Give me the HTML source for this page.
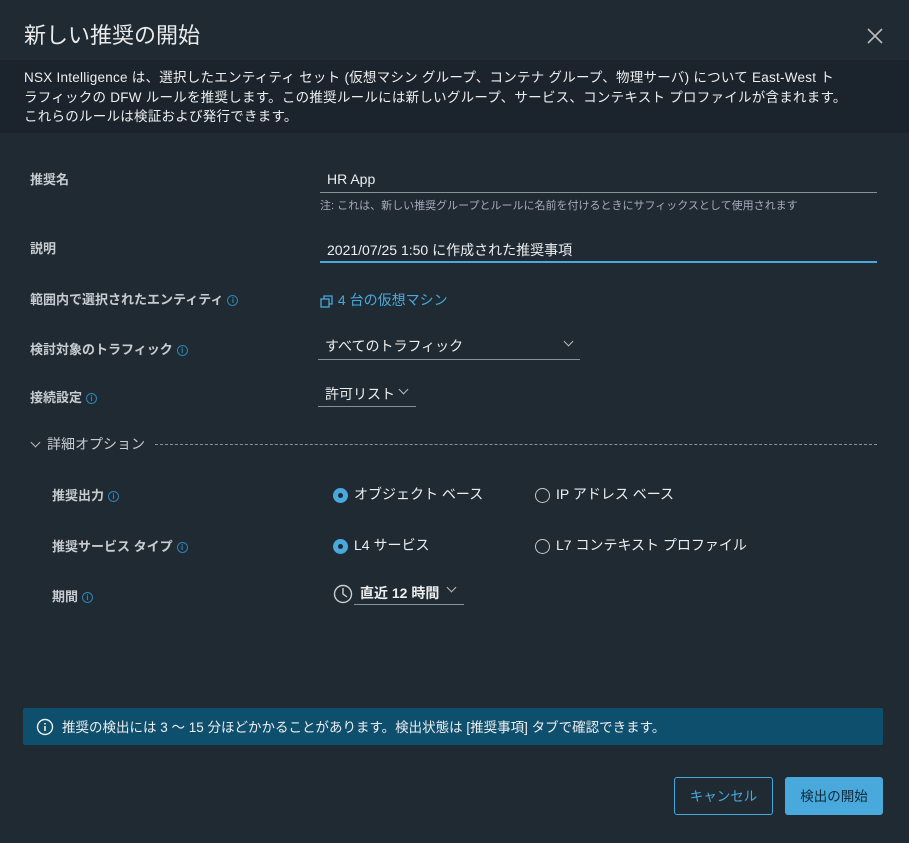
<!DOCTYPE html>
<html><head><meta charset="utf-8"><style>
*{margin:0;padding:0;box-sizing:border-box}
body{width:909px;height:843px;background:#1f2a33;font-family:"Liberation Sans","Noto Sans CJK JP",sans-serif;color:#e8e8e8;position:relative;overflow:hidden}
.abs{position:absolute;white-space:nowrap}
.title{left:24px;top:18px;font-size:22px;color:#eaeaea}
.desc{left:0;top:60px;width:909px;height:73px;background:#1b242c;padding:8px 24px;font-size:13.5px;line-height:19.5px;color:#eee;white-space:nowrap;letter-spacing:0.25px}
.lbl{font-size:13px;color:#c8ccd0;font-weight:bold}
.i{display:inline-block;width:11px;height:11px;border:1.3px solid #2e84b8;border-radius:50%;font-size:8px;line-height:9px;text-align:center;color:#2e84b8;vertical-align:middle;margin-left:4px;font-weight:bold}
.val{font-size:14px;color:#eee}
.line{position:absolute;height:1px;background:#8a9097}
.radio{display:inline-block;width:15px;height:15px;border-radius:50%;vertical-align:middle;margin-right:6px}
.on{background:#49a9dc;position:relative}
.on:after{content:"";position:absolute;left:5px;top:5px;width:5px;height:5px;border-radius:50%;background:#1f2a33}
.off{border:1.5px solid #c8c8c8}
.chev{display:inline-block;width:7px;height:7px;border-right:1.3px solid #bbb;border-bottom:1.3px solid #bbb;transform:rotate(45deg);vertical-align:middle;margin-top:-5px}
</style></head><body>
<div class="abs title">新しい推奨の開始</div>
<svg class="abs" style="left:867px;top:28px" width="16" height="16"><path d="M1 1L15 15M15 1L1 15" stroke="#bbb" stroke-width="1.6"/></svg>
<div class="abs desc">NSX Intelligence は、選択したエンティティ セット (仮想マシン グループ、コンテナ グループ、物理サーバ) について East-West ト<br>ラフィックの DFW ルールを推奨します。この推奨ルールには新しいグループ、サービス、コンテキスト プロファイルが含まれます。<br>これらのルールは検証および発行できます。</div>

<div class="abs lbl" style="left:30px;top:169px">推奨名</div>
<div class="abs val" style="left:327px;top:171px">HR App</div>
<div class="line" style="left:320px;top:192px;width:557px"></div>
<div class="abs" style="left:320px;top:197px;font-size:11px;color:#aab">注: これは、新しい推奨グループとルールに名前を付けるときにサフィックスとして使用されます</div>

<div class="abs lbl" style="left:30px;top:238px">説明</div>
<div class="abs val" style="left:327px;top:240px">2021/07/25 1:50 に作成された推奨事項</div>
<div class="line" style="left:320px;top:261px;width:557px;height:2px;background:#49a9dc"></div>

<div class="abs lbl" style="left:30px;top:289px">範囲内で選択されたエンティティ<span class="i">i</span></div>
<div class="abs" style="left:320px;top:290px;font-size:14px;color:#49a9dc"><svg width="14" height="14" style="vertical-align:middle"><rect x="1" y="5" width="8" height="8" fill="none" stroke="#49a9dc" stroke-width="1.3"/><path d="M4 5V2h8v8h-3" fill="none" stroke="#49a9dc" stroke-width="1.3"/></svg> 4 台の仮想マシン</div>

<div class="abs lbl" style="left:30px;top:339px">検討対象のトラフィック<span class="i">i</span></div>
<div class="abs val" style="left:325px;top:336px">すべてのトラフィック</div>
<span class="abs chev" style="left:565px;top:343px"></span>
<div class="line" style="left:318px;top:359px;width:262px"></div>

<div class="abs lbl" style="left:30px;top:387px">接続設定<span class="i">i</span></div>
<div class="abs val" style="left:325px;top:384px">許可リスト</div>
<span class="abs chev" style="left:400px;top:391px"></span>
<div class="line" style="left:318px;top:406px;width:98px"></div>

<div class="abs" style="left:32px;top:434px;font-size:14px;color:#c8ccd0"><span class="chev" style="margin-right:8px"></span>詳細オプション</div>
<div class="abs" style="left:155px;top:444px;width:722px;border-top:1px dashed #8a9097"></div>

<div class="abs lbl" style="left:52px;top:485px">推奨出力<span class="i">i</span></div>
<div class="abs val" style="left:333px;top:484px"><span class="radio on"></span>オブジェクト ベース</div>
<div class="abs val" style="left:535px;top:484px"><span class="radio off"></span>IP アドレス ベース</div>

<div class="abs lbl" style="left:52px;top:536px">推奨サービス タイプ<span class="i">i</span></div>
<div class="abs val" style="left:333px;top:535px"><span class="radio on"></span>L4 サービス</div>
<div class="abs val" style="left:535px;top:535px"><span class="radio off"></span>L7 コンテキスト プロファイル</div>

<div class="abs lbl" style="left:52px;top:586px">期間<span class="i">i</span></div>
<svg class="abs" style="left:333px;top:584px" width="20" height="20"><circle cx="10" cy="10" r="8.5" fill="none" stroke="#ccc" stroke-width="1.4"/><path d="M10 4v6l4 3" fill="none" stroke="#ccc" stroke-width="1.4"/></svg>
<div class="abs val" style="left:360px;top:583px;font-weight:bold">直近 12 時間</div>
<span class="abs chev" style="left:448px;top:589px"></span>
<div class="line" style="left:354px;top:604px;width:110px"></div>

<div class="abs" style="left:23px;top:708px;width:860px;height:37px;background:#0f4f6e;border-radius:2px"></div>
<svg class="abs" style="left:36px;top:718px" width="18" height="18"><circle cx="9" cy="9" r="7.5" fill="none" stroke="#eee" stroke-width="1.4"/><path d="M9 8v5M9 5v1.5" stroke="#eee" stroke-width="1.6"/></svg>
<div class="abs" style="left:62px;top:716px;font-size:13.5px;color:#eee">推奨の検出には 3 ～ 15 分ほどかかることがあります。検出状態は [推奨事項] タブで確認できます。</div>

<div class="abs" style="left:674px;top:777px;width:99px;height:38px;border:1px solid #49a9dc;border-radius:3px;color:#49a9dc;font-size:13.5px;text-align:center;line-height:38px">キャンセル</div>
<div class="abs" style="left:785px;top:777px;width:98px;height:38px;background:#49a9dc;border-radius:3px;color:#0f2a3a;font-size:13.5px;text-align:center;line-height:40px">検出の開始</div>
</body></html>
